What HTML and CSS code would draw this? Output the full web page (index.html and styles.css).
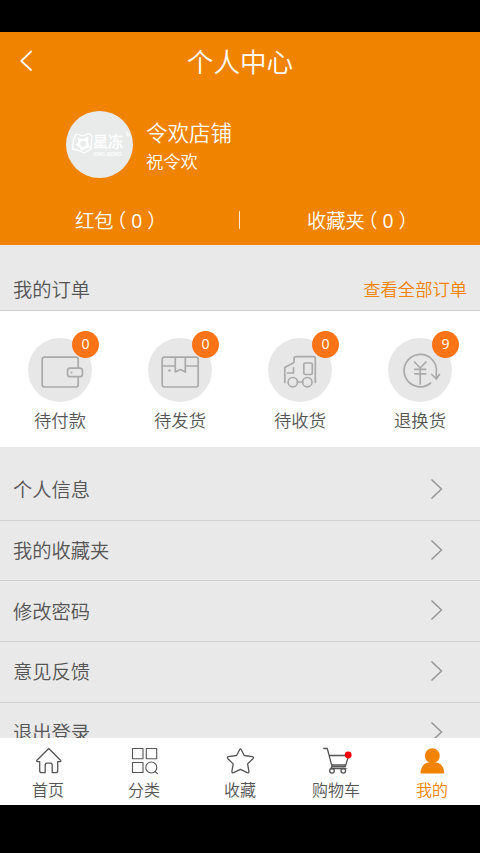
FILE: index.html
```html
<!DOCTYPE html>
<html lang="zh-CN">
<head>
<meta charset="utf-8">
<title>个人中心</title>
<link rel="stylesheet" href="styles.css">
</head>
<body>
<div class="screen">
  <header class="hero">
    <div class="titlebar">
      <svg class="back" width="14" height="22" viewBox="0 0 14 22"><path d="M12 1.500L2.300 11L12 20"/></svg>
      <h1>个人中心</h1>
    </div>
    <div class="profile">
      <div class="avatar">
        <svg class="gem" width="22" height="24" viewBox="0 0 22 24"><path class="gem-line" d="M5 3L12 5L18 2.500L21 5L20 18L13 22L8 19.500L1.500 18L2.500 9Z"/><path class="gem-fill" fill-rule="evenodd" d="M6 6.500L12 8L17.500 5.500L17 11L19 16L14 18L10.500 20L8.500 16.500L4.500 13.500L7.500 11ZM11.500 9.500L8.500 12.500L11 16L14.500 15L15.500 11Z"/></svg>
        <div class="brand"><b>星冻</b><small>XING DONG</small></div>
        <svg class="wave" width="6" height="6" viewBox="0 0 6 6"><path d="M1 1Q4.500 1.500 5 5M1 3Q3 3.500 3 5"/></svg>
      </div>
      <div class="who"><p class="shop">令欢店铺</p><p class="name">祝令欢</p></div>
    </div>
    <div class="stats"><span class="stat"><span class="label">红包</span>（<span class="count">0</span>）</span><i class="bar"></i><span class="stat"><span class="label">收藏夹</span>（<span class="count">0</span>）</span></div>
  </header>

  <section class="orders-head"><h2>我的订单</h2><a>查看全部订单</a></section>
  <section class="orders">
    <div class="order">
      <div class="disc"><svg width="64" height="64" viewBox="0 0 64 64"><path d="M50.200 30V21.500Q50.200 19.200 48 19.200H16.500Q14.200 19.200 14.200 21.500V46.500Q14.200 49 16.500 49H48Q50.200 49 50.200 46.500V39"/><rect x="39.500" y="30.200" width="15" height="8.500" rx="2.800"/><circle class="dot" cx="43.500" cy="34.500" r="1"/></svg><span class="badge">0</span></div>
      <p>待付款</p>
    </div>
    <div class="order">
      <div class="disc"><svg width="64" height="64" viewBox="0 0 64 64"><rect x="14.200" y="19.200" width="36" height="29.800" rx="2.200"/><path d="M14.500 28H27.300M37.300 28H50M27.300 19.500V34L32.300 31.500L37.300 34V19.500"/><circle class="dot" cx="21.500" cy="32.500" r="1.300"/></svg><span class="badge">0</span></div>
      <p>待发货</p>
    </div>
    <div class="order">
      <div class="disc"><svg width="64" height="64" viewBox="0 0 64 64"><path d="M16.800 44.500V29.500L26 24.500V21Q26 18.700 28.300 18.700H45Q47.300 18.700 47.300 21V44.500M25.500 29.500V35H19.500M29.300 44H35"/><rect x="35.800" y="25" width="8.500" height="11.500" rx="1.500"/><circle cx="24.800" cy="44.200" r="4.700"/><circle cx="39.300" cy="44.200" r="4.700"/></svg><span class="badge">0</span></div>
      <p>待收货</p>
    </div>
    <div class="order">
      <div class="disc"><svg width="64" height="64" viewBox="0 0 64 64"><path d="M42.700 45A16.200 16.200 0 1 1 48.300 35V40.500M43.800 36.500L48.300 41L51.500 36.500M26.500 24L32.200 30L38 24M32.200 30V46M26.700 31.300H37.700M26.700 35.800H37.700"/></svg><span class="badge">9</span></div>
      <p>退换货</p>
    </div>
  </section>

  <ul class="menu">
    <li><span>个人信息</span><svg width="14" height="22" viewBox="0 0 14 22"><path d="M2 2L11.500 11L2 20"/></svg></li>
    <li><span>我的收藏夹</span><svg width="14" height="22" viewBox="0 0 14 22"><path d="M2 2L11.500 11L2 20"/></svg></li>
    <li><span>修改密码</span><svg width="14" height="22" viewBox="0 0 14 22"><path d="M2 2L11.500 11L2 20"/></svg></li>
    <li><span>意见反馈</span><svg width="14" height="22" viewBox="0 0 14 22"><path d="M2 2L11.500 11L2 20"/></svg></li>
    <li><span>退出登录</span><svg width="14" height="22" viewBox="0 0 14 22"><path d="M2 2L11.500 11L2 20"/></svg></li>
  </ul>

  <nav class="tabs">
    <a class="tab"><svg width="32" height="30" viewBox="0 0 32 30"><path d="M16.700 2.500L4.900 14.200Q4.200 15.700 5.900 15.700H7.700V24.700Q7.700 26.700 9.700 26.700H13.200V19.200Q13.200 17.200 15.200 17.200H18.200Q20.200 17.200 20.200 19.200V26.700H23.700Q25.700 26.700 25.700 24.700V15.700H27.700Q29.400 15.700 28.500 14.200Z"/></svg>首页</a>
    <a class="tab"><svg class="thin" width="32" height="30" viewBox="0 0 32 30"><path d="M4.500 2.500H15V12.700H4.500ZM18.300 2.500H28.700V12.700H18.300ZM4.500 16.500H15V26.500H4.500Z"/><circle cx="23.300" cy="21.500" r="5.500"/><path d="M27 25.500L29.500 27.700"/></svg>分类</a>
    <a class="tab"><svg width="32" height="30" viewBox="0 0 32 30"><path d="M15.700 3.500Q16.400 2.200 17.200 3.500L20.200 9.500L28.400 10.700Q30.200 11.200 28.900 12.700L23.600 17.900L24.900 25.400Q24.900 27.200 23.200 26.700L16.400 23.300L9.600 26.700Q7.900 27.200 7.900 25.400L9.200 17.900L3.900 12.700Q2.600 11.200 4.400 10.700L12.600 9.500Z"/></svg>收藏</a>
    <a class="tab"><svg width="32" height="30" viewBox="0 0 32 30"><path d="M3.800 2.500H7.300L12 20.500H25.300L28.700 9.500H9.200M11.500 18.800H25.800M12 20.500L10.800 22.500H26"/><circle cx="12" cy="24.800" r="2.300"/><circle cx="23.300" cy="24.800" r="2.300"/><circle class="alert" cx="28.200" cy="9" r="3.400"/></svg>购物车</a>
    <a class="tab active"><svg width="32" height="30" viewBox="0 0 32 30"><circle cx="16.300" cy="9.700" r="7.500"/><path d="M4.500 27.500C4.500 20.500 9 17 12 16.500H20.500C24 17 28.300 20.500 28.300 27.500Z"/></svg>我的</a>
  </nav>
</div>
</body>
</html>
```
FILE: styles.css
```css
* { box-sizing: border-box; }
body {
  margin: 0;
  background: #000;
  font-family: "Noto Sans CJK SC DemiLight", "Noto Sans CJK SC", sans-serif;
  font-weight: 350;
  color: #555;
}
h1, h2, p, ul { margin: 0; padding: 0; font-weight: inherit; }
svg { flex: none; fill: none; stroke-linecap: round; stroke-linejoin: round; }

.screen {
  height: 853px;
  padding: 32px 0 48px;
  display: flex;
  flex-direction: column;
  overflow: hidden;
}

.hero { flex: none; height: 213px; background: #f08300; color: #fff; }
.titlebar { height: 60px; display: grid; grid-template-columns: 60px 1fr 60px; align-items: center; }
.back { margin: -2px 0 0 19px; stroke: #fff; stroke-width: 1.800; }
.titlebar h1 { font-size: 26.600px; line-height: 40px; margin-top: -2px; text-align: center; }
.profile { height: 104px; padding: 19px 0 0 66px; display: flex; gap: 13px; }
.avatar {
  position: relative;
  width: 67px;
  height: 67px;
  padding: 0 5px;
  border-radius: 50%;
  background: #e9ebea;
  color: #fff;
  display: flex;
  align-items: center;
}
.gem { margin-top: -4px; }
.gem-line { stroke: #fff; stroke-width: 1.300; }
.gem-fill { fill: #fff; }
.brand { display: flex; flex-direction: column; margin-top: -2px; }
.brand b { font-size: 15px; line-height: 20px; font-weight: 900; }
.brand small { font: italic bold 5px/6px "Liberation Sans", sans-serif; white-space: nowrap; }
.wave { position: absolute; right: 2px; top: 20px; stroke: #fff; stroke-width: 1; }
.who { padding-top: 5px; }
.shop { font-size: 21.500px; line-height: 31px; }
.name { font-size: 17.300px; line-height: 27px; }
.stats { height: 48px; padding-left: 75px; display: flex; align-items: center; font-size: 19.300px; }
.stat { font-feature-settings: "halt"; }
.stat:first-child { width: 164px; }
.label { margin-right: 3px; }
.count { padding: 0 5px; font-family: "Open Sans", sans-serif; font-weight: 400; }
.bar { width: 1px; height: 18px; margin-right: 67px; background: #ffe6c4; }

.orders-head {
  flex: none;
  height: 66px;
  padding: 22px 13px 0;
  border-bottom: 1px solid #d0d0d0;
  background: #e9e9e9;
  display: flex;
  justify-content: space-between;
}
.orders-head h2 { font-size: 19.300px; line-height: 44px; }
.orders-head a { color: #f08300; font-size: 17.300px; line-height: 44px; }

.orders { flex: none; height: 136px; padding-top: 27px; background: #fff; display: grid; grid-template-columns: repeat(4, 1fr); }
.order { display: flex; flex-direction: column; align-items: center; }
.disc { position: relative; width: 64px; height: 64px; border-radius: 50%; background: #e7e7e7; }
.disc svg { display: block; stroke: #aaa; stroke-width: 1.700; }
.disc .dot { fill: #aaa; stroke: none; }
.badge {
  position: absolute;
  top: -7px;
  right: -7px;
  width: 27px;
  height: 27px;
  border-radius: 50%;
  background: #ff7416;
  color: #fff;
  font: 400 14px/26px "Open Sans", sans-serif;
  text-align: center;
}
.order p { margin-top: 5px; font-size: 17.300px; line-height: 26px; }

.menu { flex: 1; min-height: 0; padding-top: 13px; background: #e9e9e9; overflow: hidden; list-style: none; }
.menu li {
  height: 60.700px;
  padding: 0 36px 0 13px;
  border-bottom: 1px solid #d0d0d0;
  display: flex;
  justify-content: space-between;
  align-items: center;
  font-size: 19.300px;
}
.menu span { padding-bottom: 1px; }
.menu svg { margin-top: -2px; stroke: #999; stroke-width: 1.700; }

.tabs { flex: none; height: 67px; background: #fff; display: grid; grid-template-columns: repeat(5, 1fr); }
.tab { padding-top: 8px; display: flex; flex-direction: column; align-items: center; font-size: 16px; line-height: 26px; }
.tab svg { stroke: #555; stroke-width: 1.300; }
.tab .thin { stroke-width: 1.100; }
.tab .alert { fill: #ff0000; stroke: none; }
.active { color: #f08300; }
.tab.active svg { fill: #f08300; stroke: none; }
```
